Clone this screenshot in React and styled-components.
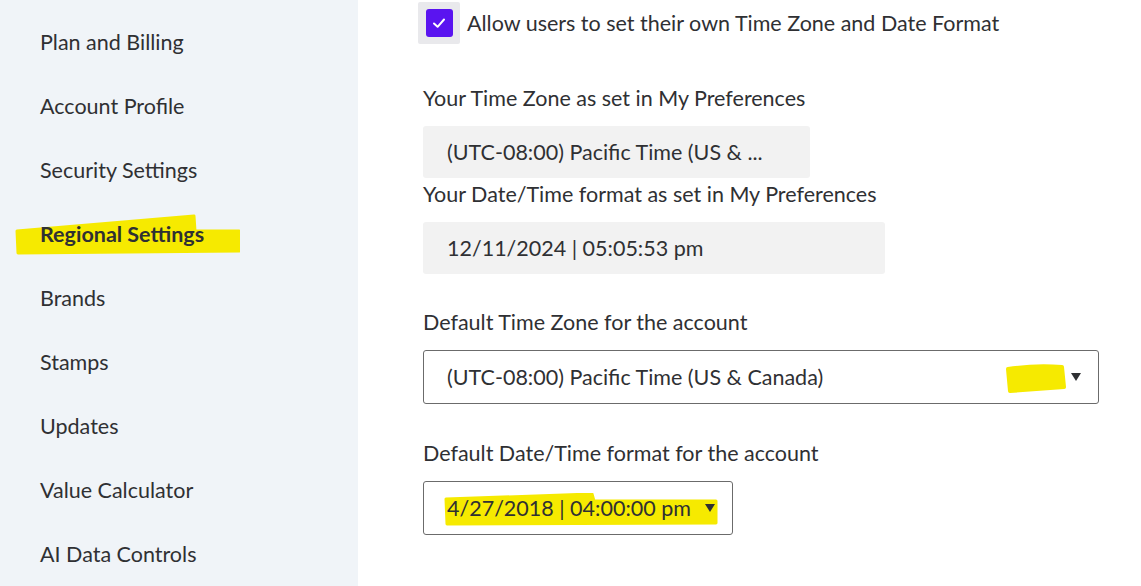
import styled, { createGlobalStyle } from "styled-components";

const GlobalStyle = createGlobalStyle`
  html, body {
    margin: 0;
    padding: 0;
    background: #fff;
    font-family: Lato, "Open Sans", sans-serif;
    color: #2f3033;
  }
`;

const menu = [
  "Plan and Billing",
  "Account Profile",
  "Security Settings",
  "Regional Settings",
  "Brands",
  "Stamps",
  "Updates",
  "Value Calculator",
  "AI Data Controls",
];

export default function App() {
  return (
    <>
      <GlobalStyle />
      <Page>
        <Sidebar>
          {menu.map((item) => (
            <MenuItem key={item} $active={item === "Regional Settings"}>
              {item === "Regional Settings" && (
                <Marker width="240" height="44" viewBox="0 0 240 44">
                  <path
                    d="M17 17 L194 2 L195 17 L239 17 L239 37 L18 39 Z"
                    fill="#f6ea00"
                    stroke="#f6ea00"
                    strokeWidth="3"
                    strokeLinejoin="round"
                  />
                </Marker>
              )}
              <span>{item}</span>
            </MenuItem>
          ))}
        </Sidebar>

        <Main>
          <CheckRow>
            <CheckWrap>
              <CheckBox>
                <svg width="16" height="16" viewBox="0 0 16 16">
                  <path d="M3 8.5 L6.6 11.8 L13 4.5" fill="none" stroke="#fff" strokeWidth="2" strokeLinecap="round" strokeLinejoin="round" />
                </svg>
              </CheckBox>
            </CheckWrap>
            <CheckLabel>Allow users to set their own Time Zone and Date Format</CheckLabel>
          </CheckRow>

          <Label $top={42}>Your Time Zone as set in My Preferences</Label>
          <ReadOnly $width={387}>(UTC-08:00) Pacific Time (US &amp; ...</ReadOnly>

          <Label $top={4}>Your Date/Time format as set in My Preferences</Label>
          <ReadOnly $width={462}>12/11/2024 | 05:05:53 pm</ReadOnly>

          <Label $top={36}>Default Time Zone for the account</Label>
          <Select $width={676}>
            <span>(UTC-08:00) Pacific Time (US &amp; Canada)</span>
            <Marker width="64" height="30" viewBox="0 0 64 30" style={{ left: 580, top: 12 }}>
              <path d="M4 6 Q30 2 58 4 L60 24 Q32 26 6 28 Z" fill="#f6ea00" stroke="#f6ea00" strokeWidth="4" strokeLinejoin="round" />
            </Marker>
            <Caret />
          </Select>

          <Label $top={37}>Default Date/Time format for the account</Label>
          <Select $width={310}>
            <Marker width="276" height="34" viewBox="0 0 276 34" style={{ left: 20, top: 11 }}>
              <path d="M2 6 L148 1 L150 8 L272 8 L272 30 L3 31 Z" fill="#f6ea00" stroke="#f6ea00" strokeWidth="3" strokeLinejoin="round" />
            </Marker>
            <span>4/27/2018 | 04:00:00 pm</span>
            <Caret $gap />
          </Select>
        </Main>
      </Page>
    </>
  );
}

// ==================================== STYLES ===============================

const Page = styled.div`
  display: flex;
  width: 1141px;
  height: 586px;
  overflow: hidden;
`;

const Sidebar = styled.nav`
  width: 358px;
  flex-shrink: 0;
  background: #f0f4f8;
  padding-top: 10px;
  display: flex;
  flex-direction: column;
`;

const MenuItem = styled.div`
  position: relative;
  height: 64px;
  display: flex;
  align-items: center;
  padding-left: 40px;
  font-size: 21.5px;
  font-weight: ${(p) => (p.$active ? 700 : 400)};
  color: #2f3033;

  & span {
    position: relative;
    z-index: 1;
  }
`;

const Marker = styled.svg`
  position: absolute;
  left: 0;
  top: 12px;
  z-index: 0;
  pointer-events: none;
`;

const Main = styled.main`
  flex: 1;
  padding-left: 65px;
  padding-top: 2px;
  display: flex;
  flex-direction: column;
  align-items: flex-start;
`;

const CheckRow = styled.label`
  display: flex;
  align-items: center;
  gap: 7px;
  margin-left: -5px;
`;

const CheckWrap = styled.div`
  width: 42px;
  height: 42px;
  background: #e9e9ec;
  border-radius: 2px;
  display: flex;
  align-items: center;
  justify-content: center;
`;

const CheckBox = styled.div`
  width: 27px;
  height: 28px;
  border-radius: 3px;
  background: #5a14f0;
  display: flex;
  align-items: center;
  justify-content: center;
`;

const CheckLabel = styled.span`
  font-size: 21.5px;
  color: #2f3033;
`;

const Label = styled.div`
  margin-top: ${(p) => p.$top}px;
  margin-bottom: 16px;
  font-size: 21.5px;
  line-height: 24px;
  color: #2f3033;
`;

const ReadOnly = styled.div`
  width: ${(p) => p.$width}px;
  height: 52px;
  box-sizing: border-box;
  background: #f2f2f2;
  border-radius: 3px;
  padding-left: 24px;
  display: flex;
  align-items: center;
  font-size: 21.5px;
  color: #2f3033;
`;

const Select = styled.div`
  position: relative;
  width: ${(p) => p.$width}px;
  height: 54px;
  box-sizing: border-box;
  border: 1px solid #6b6b6b;
  border-radius: 3px;
  padding: 0 17px 0 23px;
  display: flex;
  align-items: center;
  justify-content: space-between;
  font-size: 21.5px;
  color: #2f3033;

  & span {
    position: relative;
    z-index: 1;
  }
`;

const Caret = styled.i`
  position: relative;
  z-index: 1;
  width: 0;
  height: 0;
  border-left: 5.5px solid transparent;
  border-right: 5.5px solid transparent;
  border-top: 8px solid #2f3033;
  margin-left: ${(p) => (p.$gap ? "8px" : "0")};
`;
